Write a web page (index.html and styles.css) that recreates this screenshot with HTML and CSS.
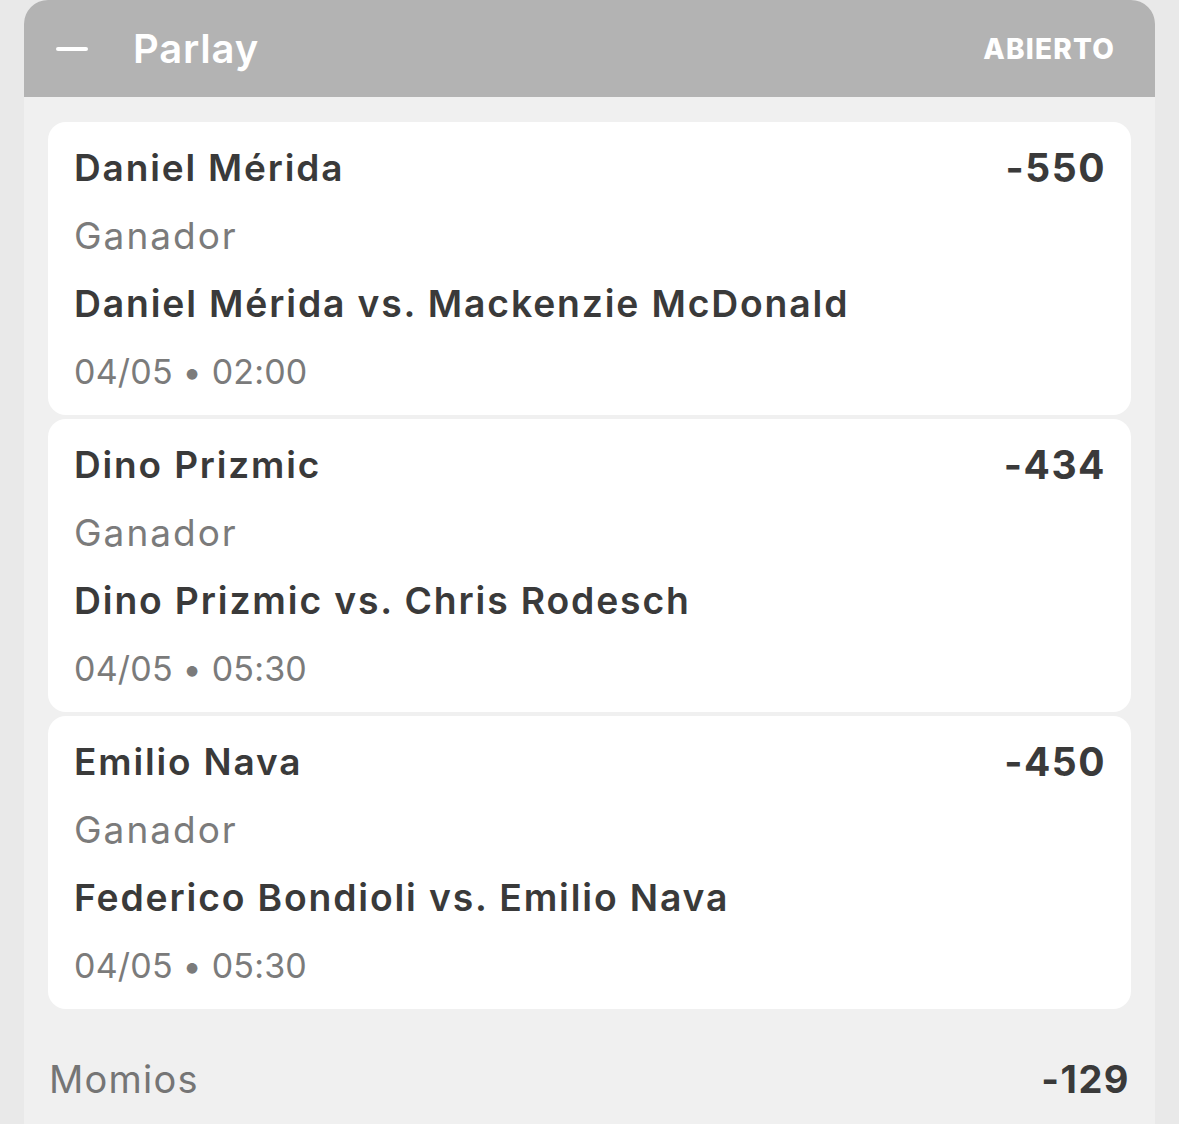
FILE: index.html
```html
<!DOCTYPE html>
<html lang="es">
<head>
<meta charset="utf-8">
<link rel="stylesheet" href="styles.css">
</head>
<body>
<div class="panel">
  <div class="header">
    <span class="minus"></span>
    <span class="title">Parlay</span>
    <span class="status">ABIERTO</span>
  </div>
  <div class="cards">
    <div class="card">
      <div class="row"><span class="name">Daniel Mérida</span><span class="odds">-550</span></div>
      <div class="market">Ganador</div>
      <div class="match">Daniel Mérida vs. Mackenzie McDonald</div>
      <div class="date">04/05 • 02:00</div>
    </div>
    <div class="card">
      <div class="row"><span class="name">Dino Prizmic</span><span class="odds">-434</span></div>
      <div class="market">Ganador</div>
      <div class="match">Dino Prizmic vs. Chris Rodesch</div>
      <div class="date">04/05 • 05:30</div>
    </div>
    <div class="card">
      <div class="row"><span class="name">Emilio Nava</span><span class="odds">-450</span></div>
      <div class="market">Ganador</div>
      <div class="match">Federico Bondioli vs. Emilio Nava</div>
      <div class="date">04/05 • 05:30</div>
    </div>
  </div>
  <div class="total">
    <span class="label">Momios</span>
    <span class="value">-129</span>
  </div>
</div>
</body>
</html>
```
FILE: styles.css
```css
html, body {
  margin: 0;
  padding: 0;
}
body {
  background: #e9e9e9;
  font-family: Inter, "Noto Sans", sans-serif;
  width: 1179px;
  height: 1124px;
  overflow: hidden;
}
.panel {
  margin: 0 24px;
  background: #f0f0f0;
  border-radius: 24px 24px 0 0;
  height: 1124px;
  overflow: hidden;
}
.header {
  height: 97px;
  background: #b3b3b3;
  display: flex;
  align-items: center;
  padding: 0 40px 0 32px;
  color: #ffffff;
}
.minus {
  width: 32px;
  height: 4px;
  background: #ffffff;
  border-radius: 2px;
  margin-right: 45px;
}
.title {
  font-size: 40px;
  font-weight: 600;
  flex: 1;
  letter-spacing: 0.8px;
}
.status {
  font-size: 28px;
  font-weight: 800;
  letter-spacing: 1.2px;
}
.cards {
  padding: 25px 24px 0;
  display: flex;
  flex-direction: column;
  gap: 4px;
}
.card {
  background: #ffffff;
  border-radius: 18px;
  padding: 12px 26px 9px;
  color: #3a3a3a;
}
.card > div {
  height: 68px;
  line-height: 68px;
  font-size: 37px;
}
.row {
  display: flex;
  justify-content: space-between;
}
.name, .match {
  font-weight: 600;
  letter-spacing: 1.85px;
}
.card > .match {
  font-size: 37.3px;
}
.odds {
  font-weight: 700;
  font-size: 39px;
  letter-spacing: 1.5px;
  margin-right: -1px;
}
.market {
  color: #7b7b7b;
  font-weight: 400;
  letter-spacing: 2px;
}
.card > .date {
  font-size: 34px;
  color: #7b7b7b;
  letter-spacing: 0.2px;
}
.total {
  display: flex;
  justify-content: space-between;
  align-items: center;
  padding: 36px 26px 0 25px;
  height: 68px;
}
.label {
  font-size: 38px;
  color: #757575;
  letter-spacing: 1.2px;
}
.value {
  font-size: 38px;
  font-weight: 700;
  color: #3a3a3a;
  letter-spacing: 1.5px;
  margin-right: -1px;
}
```
